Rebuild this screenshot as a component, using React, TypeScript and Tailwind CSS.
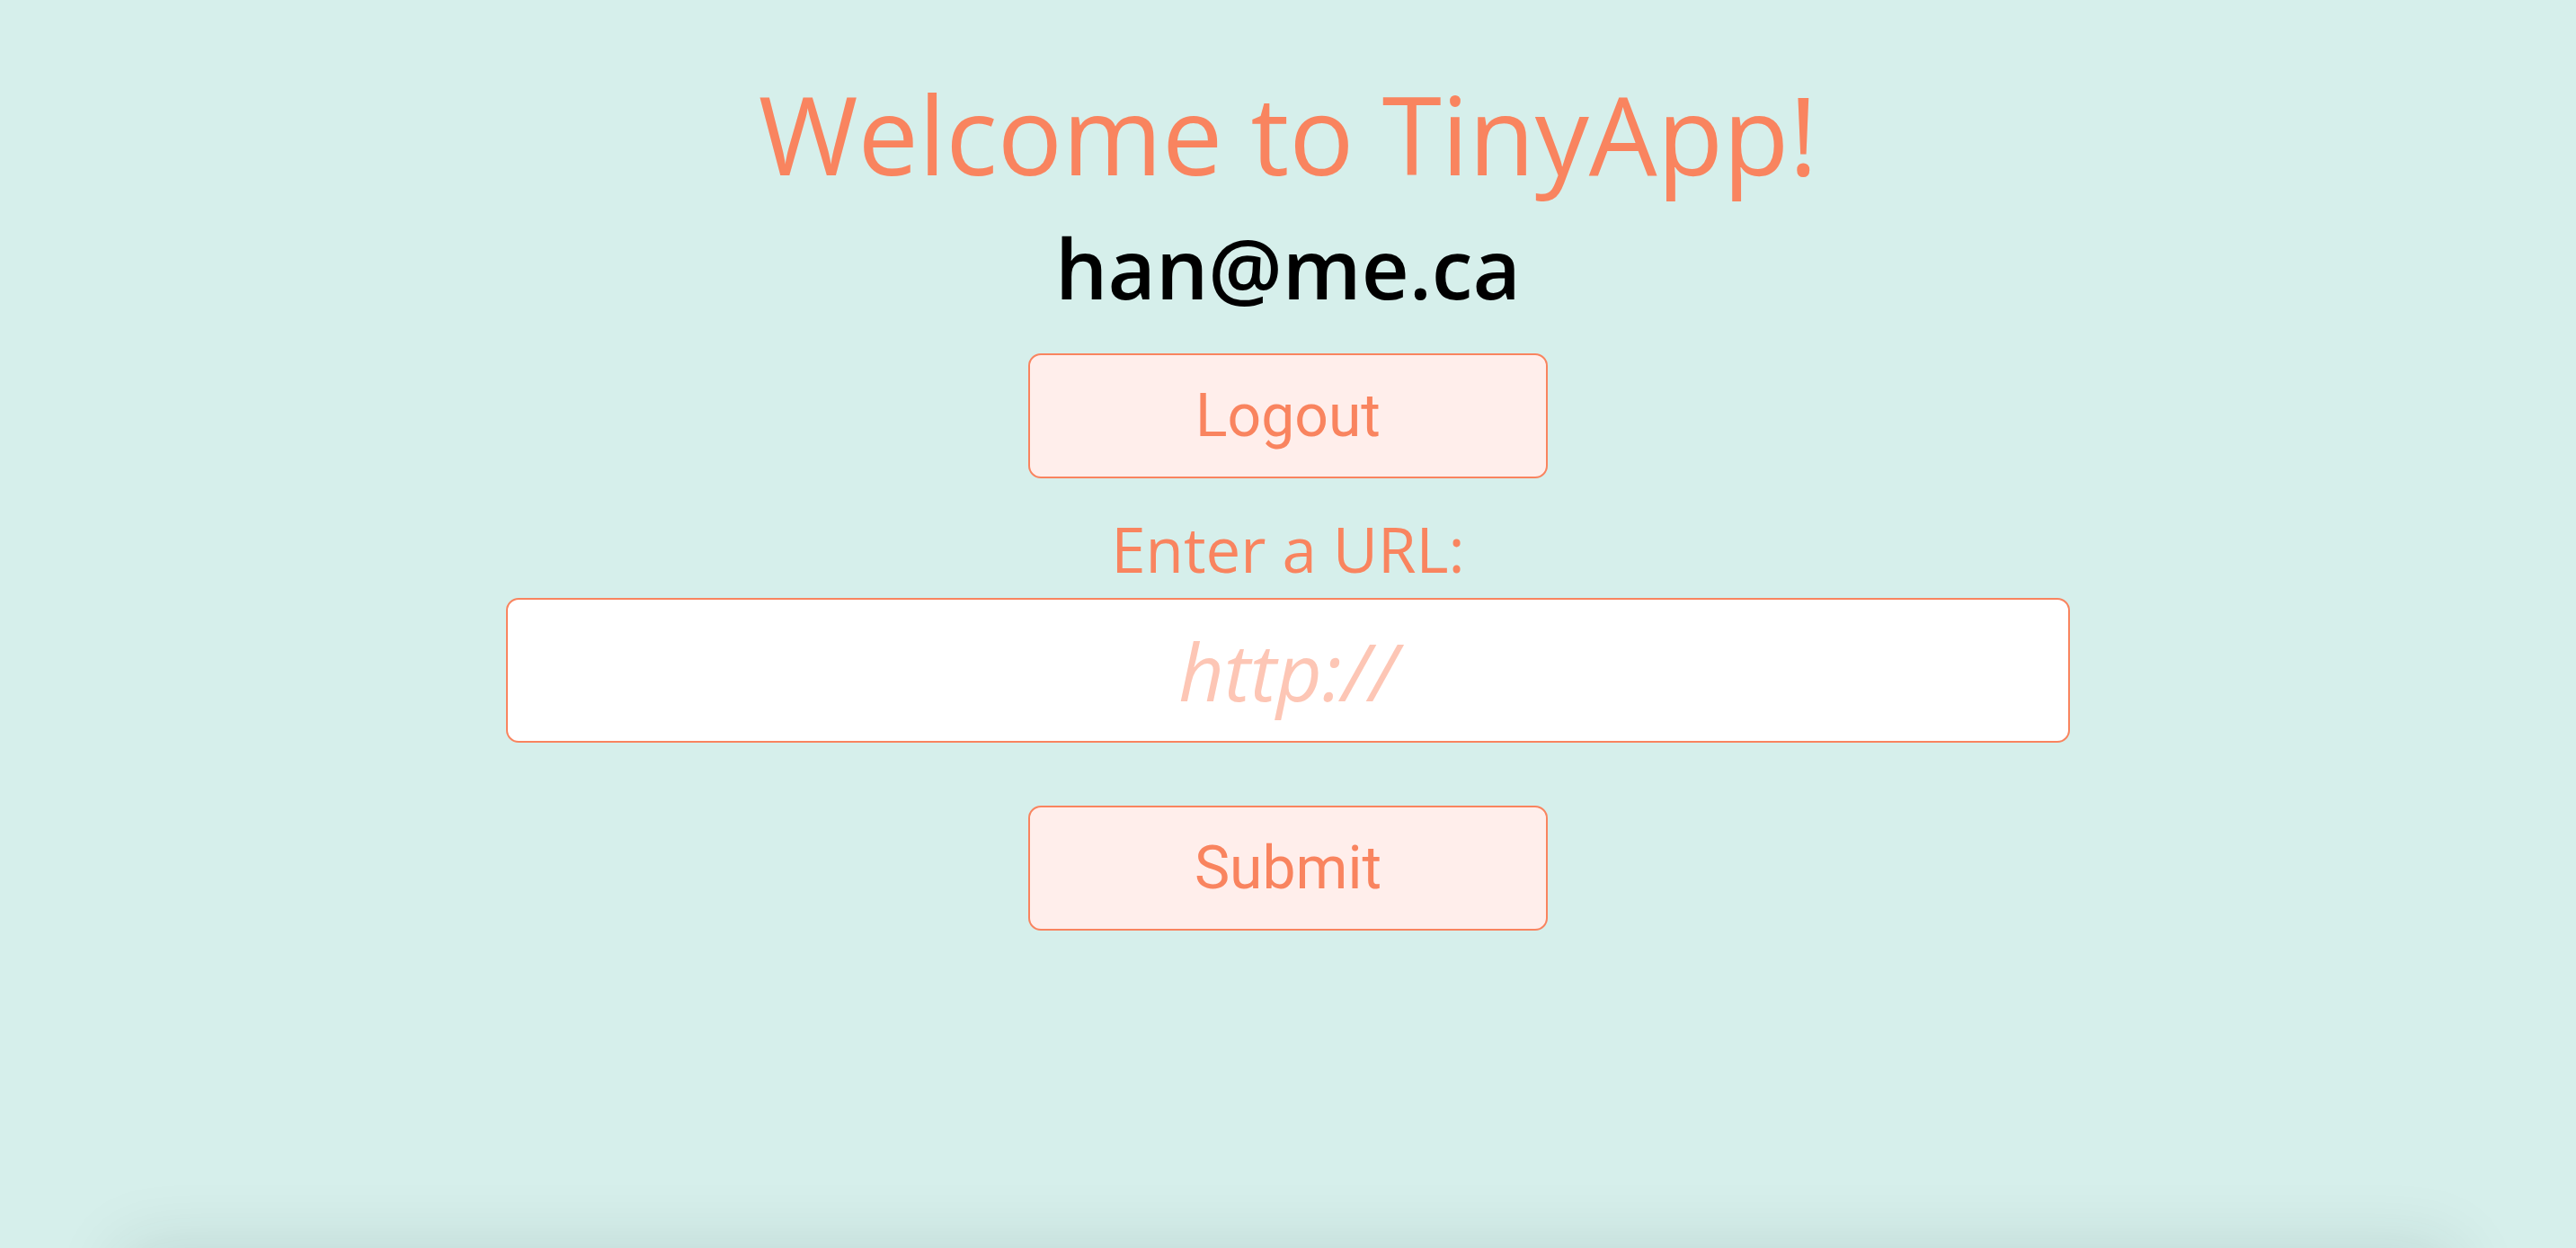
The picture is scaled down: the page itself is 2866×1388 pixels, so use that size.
export default function App() {
  return (
    <div className="h-screen overflow-hidden bg-[#d6efeb] flex flex-col">
      {/* ── MAIN ── */}
      <main className="h-screen shrink-0 flex flex-col items-center font-['Open_Sans','Noto_Sans',sans-serif]">
        <h1 className="mt-[89px] text-[120px] leading-none font-normal text-[#f9845f]">
          Welcome to TinyApp!
        </h1>

        <div className="mt-[43px] text-[92px] leading-none font-semibold text-black">
          han@me.ca
        </div>

        <form className="flex flex-col items-center" onSubmit={(e) => e.preventDefault()}>
          <button
            type="button"
            className="mt-[49px] w-[578px] h-[139px] flex items-center justify-center bg-[#ffeeeb] border-2 border-[#f9845f] rounded-[14px] font-['Roboto','Liberation_Sans',sans-serif] text-[66px] font-normal text-[#f9845f]"
          >
            Logout
          </button>

          <label htmlFor="longURL" className="mt-[44px] text-[69px] leading-none font-normal text-[#f9845f]">
            Enter a URL:
          </label>

          <input
            id="longURL"
            type="text"
            placeholder="http://"
            className="mt-[20px] w-[1740px] h-[161px] bg-white border-2 border-[#f9845f] rounded-[14px] text-center text-[88px] italic font-normal text-[#f9845f] placeholder:text-[#fdc6b5] outline-none"
          />

          <button
            type="submit"
            className="mt-[70px] w-[578px] h-[139px] flex items-center justify-center bg-[#ffeeeb] border-2 border-[#f9845f] rounded-[14px] font-['Roboto','Liberation_Sans',sans-serif] text-[66px] font-normal text-[#f9845f]"
          >
            Submit
          </button>
        </form>
      </main>

      {/* ── FOOTER (below the fold, only its shadow shows) ── */}
      <footer className="shrink-0 w-[90.5%] h-[200px] mx-auto bg-[#d6efeb] shadow-[0_0_80px_rgba(0,40,40,0.12)]" />
    </div>
  );
}
